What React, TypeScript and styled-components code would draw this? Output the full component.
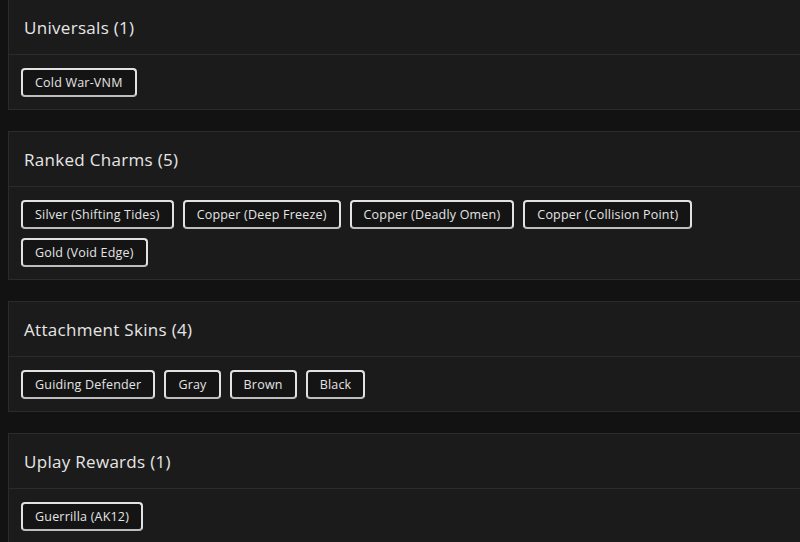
import styled, { createGlobalStyle } from "styled-components";

type Section = {
  title: string;
  items: string[];
};

const sections: Section[] = [
  { title: "Universals", items: ["Cold War-VNM"] },
  {
    title: "Ranked Charms",
    items: [
      "Silver (Shifting Tides)",
      "Copper (Deep Freeze)",
      "Copper (Deadly Omen)",
      "Copper (Collision Point)",
      "Gold (Void Edge)",
    ],
  },
  {
    title: "Attachment Skins",
    items: ["Guiding Defender", "Gray", "Brown", "Black"],
  },
  { title: "Uplay Rewards", items: ["Guerrilla (AK12)"] },
];

const GlobalStyle = createGlobalStyle`
  html, body {
    margin: 0;
    background: #121212;
    overflow: hidden;
  }
  body {
    font-family: "Open Sans", "Liberation Sans", sans-serif;
  }
`;

export default function App() {
  return (
    <>
      <GlobalStyle />
      <Page>
        {sections.map((s) => (
          <Card key={s.title}>
            <CardHeader>
              {s.title} ({s.items.length})
            </CardHeader>
            <ChipList>
              {s.items.map((item) => (
                <Chip key={item}>{item}</Chip>
              ))}
            </ChipList>
          </Card>
        ))}
      </Page>
    </>
  );
}

// cards run a little past the right edge of the window
const Page = styled.div`
  width: 814px;
  display: flex;
  flex-direction: column;
  gap: 21px;
  margin-top: -1px;
  padding-left: 8px;
`;

const Card = styled.div`
  background: #1b1b1b;
  border: 1px solid #2b2b2b;
`;

const CardHeader = styled.div`
  height: 54px;
  display: flex;
  align-items: center;
  padding: 0 15px;
  border-bottom: 1px solid #2b2b2b;
  color: #e6e6e6;
  font-size: 17px;
  font-weight: 500;
  letter-spacing: 0.3px;
`;

const ChipList = styled.div`
  display: flex;
  flex-wrap: wrap;
  gap: 9px 9px;
  padding: 13px 12px 12px;
`;

const Chip = styled.div`
  height: 29px;
  box-sizing: border-box;
  display: flex;
  align-items: center;
  padding: 0 12px;
  border: 2px solid #e2e2e2;
  border-bottom-color: #bdbdbd;
  border-radius: 4px;
  background: #141414;
  color: #e4e4e4;
  font-size: 12.5px;
  letter-spacing: 0.2px;
`;
